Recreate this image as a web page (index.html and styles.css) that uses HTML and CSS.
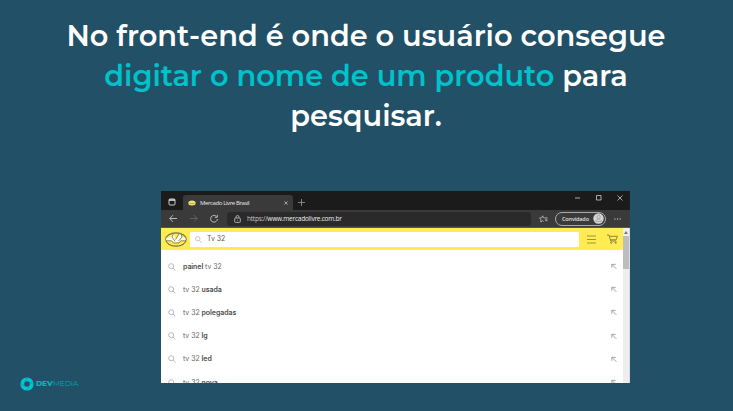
FILE: index.html
```html
<!DOCTYPE html>
<html lang="pt-BR">
<head>
<meta charset="utf-8">
<title>Front-end</title>
<link rel="stylesheet" href="styles.css">
</head>
<body>
<svg class="defs" aria-hidden="true">
  <symbol id="search" viewBox="0 0 8 8"><circle cx="3.2" cy="3.2" r="2.5"/><path d="M5 5l2.5 2.5"/></symbol>
  <symbol id="fill" viewBox="0 0 7 7"><path d="M1 5V1h4.5M1 1l5.3 5.3"/></symbol>
</svg>
<main class="slide">
  <h1 class="title">
    <span class="line">No front-end é onde o usuário consegue</span>
    <span class="line"><em>digitar o nome de um produto</em> para</span>
    <span class="line">pesquisar.</span>
  </h1>
  <section class="browser">
    <div class="tabs">
      <svg class="workspace" viewBox="0 0 8 8"><rect x="1" y="1" width="6" height="6" rx="1"/><path d="M1 2h6" stroke-width="1.8"/></svg>
      <div class="tab">
        <svg class="favicon" viewBox="0 0 8 6"><ellipse cx="4" cy="3" rx="3.7" ry="2.5"/><path d="M1.500 3.500h5"/></svg>
        <span class="tab-name">Mercado Livre Brasil</span>
        <svg class="close" viewBox="0 0 5 5"><path d="M.5.5l4 4m0-4l-4 4"/></svg>
      </div>
      <svg class="plus" viewBox="0 0 7 7"><path d="M3.5 0v7M0 3.5h7"/></svg>
      <svg class="window-controls" viewBox="0 0 48 6"><path d="M0 3h5M21.500 .5h4.500v4.500h-4.500zM42.500 .5l5 5m0-5l-5 5"/></svg>
    </div>
    <div class="toolbar">
      <svg class="nav" viewBox="0 0 50 9"><path d="M8 4.500H.8M4 1.200L.7 4.500 4 7.800"/><path class="dim" d="M21 4.500h7M25 1.200l3.300 3.300L25 7.800"/><path d="M47.500 2.500A3.400 3.400 0 1 0 48.400 5M48.300 .8v2.500h-2.500"/></svg>
      <div class="address">
        <svg class="lock" viewBox="0 0 7 8"><rect x=".7" y="3" width="5.600" height="4.400" rx=".7"/><path d="M2 3V2a1.500 1.500 0 0 1 3 0v1M3.500 4.800v.8"/></svg>
        <span class="url"><i>https://</i>www.mercadolivre.com.br</span>
      </div>
      <svg class="star" viewBox="0 0 9 8"><path d="M3.600 .8l.9 2 2.100.2M3.600 .8l-.9 2-2.200.3 1.600 1.500-.4 2.300 2-1.100 1 .6M6 4.200h2.500M6 5.700h2.500M6.500 2.800h2"/></svg>
      <div class="profile"><span>Convidado</span>
        <svg class="avatar" viewBox="0 0 11 11"><circle class="disc" cx="5.500" cy="5.500" r="5.200"/><circle cx="5.500" cy="4" r="1.700"/><path d="M2.700 8.500c.3-3 5.300-3 5.600 0z"/></svg>
      </div>
      <svg class="dots" viewBox="0 0 8 2"><circle cx="1" cy="1" r=".8"/><circle cx="4" cy="1" r=".8"/><circle cx="7" cy="1" r=".8"/></svg>
    </div>
    <div class="viewport">
      <div class="page">
        <header class="shop">
          <svg class="brand" viewBox="0 0 22 15"><ellipse class="oval" cx="11" cy="7.500" rx="10.200" ry="6.600"/><path class="hands" d="M1.500 5.500L6 5 8 1.500l3 6 4-6L17 5l3.500.5v3h-5l-3 2h-4l-2-2H1z"/><path d="M8.500 1.200L7 5l3 4.300M14.500 1.200L10.500 7.500M16 1.800L17 5l-3.500 4M1 8.800h5.500l2 2.200h5.500l2-2.200h5"/></svg>
          <div class="field"><svg class="search"><use href="#search"/></svg><span>Tv 32</span></div>
          <svg class="menu" viewBox="0 0 9 9"><path d="M0 1h9M0 4.500h9M0 8h9"/></svg>
          <svg class="cart" viewBox="0 0 11 10"><path d="M0 1h2l1.700 6h5.500M2.400 2.300h8l-1.200 3.500H3.300"/><circle cx="4.300" cy="8.700" r=".7"/><circle cx="8.700" cy="8.700" r=".7"/></svg>
        </header>
        <ul class="suggestions">
          <li><svg class="search"><use href="#search"/></svg><span><b>painel</b> tv 32</span><svg class="fill"><use href="#fill"/></svg></li>
          <li><svg class="search"><use href="#search"/></svg><span>tv 32 <b>usada</b></span><svg class="fill"><use href="#fill"/></svg></li>
          <li><svg class="search"><use href="#search"/></svg><span>tv 32 <b>polegadas</b></span><svg class="fill"><use href="#fill"/></svg></li>
          <li><svg class="search"><use href="#search"/></svg><span>tv 32 <b>lg</b></span><svg class="fill"><use href="#fill"/></svg></li>
          <li><svg class="search"><use href="#search"/></svg><span>tv 32 <b>led</b></span><svg class="fill"><use href="#fill"/></svg></li>
          <li><svg class="search"><use href="#search"/></svg><span>tv 32 <b>nova</b></span><svg class="fill"><use href="#fill"/></svg></li>
        </ul>
      </div>
      <div class="scrollbar"><svg class="up" viewBox="0 0 4 3"><path d="M0 3l2-3 2 3z"/></svg><div class="thumb"></div></div>
    </div>
  </section>
  <footer class="devmedia">
    <svg class="mark" viewBox="0 0 14 14"><circle cx="7" cy="7" r="4.700"/><path d="M5 4.500L7.500 .5M9.500 5l4 2.500M9 9.500L6.500 13.500M4.500 9l-4-2.500"/></svg>
    <span class="wordmark"><b>DEV</b>MEDIA</span>
  </footer>
</main>
</body>
</html>
```

FILE: styles.css
```css
* { box-sizing: border-box; }
body { margin: 0; background: #215067; font-family: "Open Sans", "Noto Sans", sans-serif; }
svg { display: block; flex: none; fill: none; stroke: currentColor; overflow: visible; }
.defs { position: absolute; width: 0; height: 0; }
.slide { width: 733px; height: 411px; padding-top: 16px; overflow: hidden; }
.title { margin: 0; height: 175px; padding-right: 1px; font: 600 28.800px/40px Montserrat, Inter, sans-serif; color: #fff; text-align: center; }
.title em { font-style: normal; color: #00c2cb; }
.line { display: block; white-space: nowrap; }

.browser { display: flex; flex-direction: column; width: 469px; height: 192px; margin-left: 161px; background: #fff; overflow: hidden; }
.tabs { display: flex; align-items: center; height: 19px; flex: none; background: #1b1b1b; color: #ccc; }
.workspace { width: 8px; height: 8px; margin: 3px 0 0 7px; }
.tab { display: flex; align-items: center; width: 110px; height: 15px; margin: 4px 0 0 7px; padding: 0 5px 0 5px; background: #3a3a3a; border-radius: 3px 3px 0 0; }
.favicon { width: 8px; height: 6px; stroke: #a39a50; stroke-width: .7; }
.favicon ellipse { fill: #f3e06a; stroke: none; }
.tab-name { margin-left: 4px; font-size: 6px; line-height: 8px; letter-spacing: -.38px; color: #e8e8e8; white-space: nowrap; }
.close { width: 4px; height: 4px; margin-left: auto; stroke-width: .9; }
.plus { width: 7px; height: 7px; margin: 3px 0 0 5px; color: #999; stroke-width: .8; }
.window-controls { width: 48px; height: 6px; margin: 0 7px 5px auto; stroke-width: .8; }

.toolbar { display: flex; align-items: center; height: 18px; flex: none; padding-left: 8px; background: #3a3a3a; color: #c6c6c6; border-bottom: 1px solid #555; }
.nav { width: 50px; height: 9px; stroke-width: .9; }
.nav .dim { stroke: #666; }
.address { display: flex; align-items: center; width: 304px; height: 14px; margin-left: 8px; padding-left: 7px; border-radius: 3px; background: #2a2a2a; }
.lock { width: 7px; height: 8px; stroke-width: .8; }
.url { margin-left: 6px; font: 6.5px/9px "Open Sans", sans-serif; letter-spacing: -.23px; color: #ececec; white-space: nowrap; }
.url i { font-style: normal; color: #c8c8c8; }
.star { width: 9px; height: 8px; margin-left: 8px; stroke-width: .75; }
.profile { display: flex; align-items: center; justify-content: space-between; width: 51px; height: 14px; margin-left: 7px; padding: 0 1px 0 6px; border: 1px solid #aaa; border-radius: 8px; font: 600 5.500px/8px "Open Sans", sans-serif; letter-spacing: -.15px; color: #e0e0e0; }
.avatar { width: 11px; height: 11px; stroke: #999; stroke-width: .7; }
.avatar .disc { fill: #d4d4d4; stroke: none; }
.dots { width: 7px; height: 2px; margin-left: 8px; fill: #bbb; stroke: none; }

.viewport { display: flex; flex: 1; min-height: 0; }
.page { width: 462px; }
.shop { display: flex; align-items: center; height: 22px; padding-left: 4px; background: #ffec52; color: #857c42; }
.brand { width: 22px; height: 15px; stroke: #757054; stroke-width: .8; }
.brand .oval { fill: #ffec52; stroke-width: 1.1; }
.brand .hands { fill: #fffdf2; stroke: none; }
.field { display: flex; align-items: center; width: 389px; height: 15px; margin-left: 3px; padding-left: 5px; background: #fff; color: #555; font: 7px/10px Inter, sans-serif; }
.search { width: 8px; height: 8px; color: #b2b2b8; stroke-width: .9; }
.field .search { width: 7px; height: 7px; }
.field span { margin-left: 5px; letter-spacing: -.1px; }
.menu { width: 9px; height: 9px; margin-left: 8px; stroke-width: .8; }
.cart { width: 11px; height: 10px; margin-left: 11px; stroke-width: .9; }
.suggestions { margin: 0; padding: 5px 0 0; list-style: none; }
.suggestions li { display: flex; align-items: center; height: 23.200px; padding: 0 6px 0 7px; color: #666; font: 7px/10px Inter, sans-serif; letter-spacing: -.06px; }
.suggestions span { margin-left: 7px; white-space: pre; }
.suggestions b { font-weight: 600; color: #4b4b4b; }
.fill { width: 6px; height: 7px; margin-left: auto; color: #96969b; stroke-width: 1; }
.scrollbar { width: 7px; background: #eeeef1; border-right: 1px solid #ddd; }
.up { width: 4px; height: 3px; margin: 3px 0 2px 1px; fill: #777; stroke: none; }
.thumb { width: 6px; height: 33px; background: #bdbdc0; }

.devmedia { display: flex; align-items: center; height: 14px; margin: -6px 0 0 20px; color: #00c6d0; }
.mark { width: 14px; height: 14px; stroke-width: 3.800; }
.mark path { stroke: #1b8393; stroke-width: .6; }
.wordmark { margin-left: 2px; font: 7.500px/10px Montserrat, Inter, sans-serif; letter-spacing: -.07px; color: #08a6b3; }
.wordmark b { font-weight: 800; color: #05b2be; }
```
